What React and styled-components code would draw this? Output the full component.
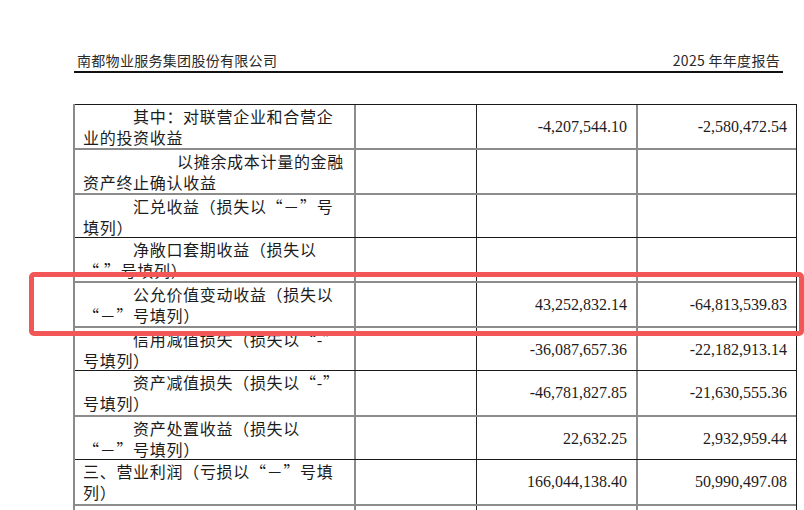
import React from "react";
import styled, { createGlobalStyle } from "styled-components";

const Global = createGlobalStyle`
  html, body { margin: 0; padding: 0; background: #fff; }
  body { overflow: hidden; width: 804px; height: 510px; }
  #root { position: relative; }
`;

const Page = styled.div`
  position: relative;
  width: 804px;
  height: 510px;
  overflow: hidden;
  background: #fff;
`;

const Header = styled.div`
  margin-left: 74px;
  width: 709px;
  box-sizing: border-box;
  padding: 50px 3px 1px 3px;
  display: flex;
  justify-content: space-between;
  align-items: center;
  border-bottom: 2px solid #111;
  font-family: "Noto Sans CJK SC", "Noto Sans", sans-serif;
  font-size: 14px;
  letter-spacing: 0.3px;
  line-height: 20px;
  color: #2a2a2a;
`;

const Table = styled.div`
  margin-top: 31px;
  margin-left: 73px;
  width: 724px;
  box-sizing: border-box;
  border-left: 2px solid #8a8a8a;
  border-right: 1px solid #1a1a1a;
  display: flex;
  flex-direction: column;
`;

const Row = styled.div`
  display: grid;
  grid-template-columns: 279px 122px 160px 160px;
  box-sizing: border-box;
  height: ${(p) => p.$h}px;
  border-top: ${(p) => (p.$grey ? "2px solid #8c8c8c" : "1px solid #1a1a1a")};
  flex-shrink: 0;
`;

const Cell = styled.div`
  box-sizing: border-box;
  border-left: ${(p) =>
    p.$edge === "grey" ? "2px solid #8c8c8c" : p.$edge === "dark" ? "1px solid #222" : "none"};
  min-width: 0;
`;

const LabelCell = styled(Cell)`
  padding: 1px 0 0 8px;
  font-family: "Noto Sans CJK SC", "Noto Sans", sans-serif;
  font-size: 16px;
  letter-spacing: 0.7px;
  line-height: 21px;
  color: #1c1c1c;
  white-space: nowrap;
`;

const Line = styled.div`
  padding-left: ${(p) => p.$indent || 0}px;
`;

const NumCell = styled(Cell)`
  display: flex;
  align-items: center;
  justify-content: flex-end;
  padding-right: 9px;
  font-family: "Liberation Serif", "Times New Roman", serif;
  font-size: 16px;
  color: #1c1c1c;
`;

const Highlight = styled.div`
  position: absolute;
  left: 29px;
  top: 272px;
  width: 775px;
  height: 64px;
  box-sizing: border-box;
  border: 5.5px solid #f35656;
  border-radius: 5px;
  pointer-events: none;
`;

const rows = [
  { h: 44, grey: false, indent: 50, lines: ["其中：对联营企业和合营企", "业的投资收益"], v: ["-4,207,544.10", "-2,580,472.54"] },
  { h: 45, grey: true, indent: 94, lines: ["以摊余成本计量的金融", "资产终止确认收益"], v: ["", ""] },
  { h: 44, grey: true, indent: 50, lines: ["汇兑收益（损失以“－”号", "填列）"], v: ["", ""] },
  { h: 44, grey: false, indent: 50, lines: ["净敞口套期收益（损失以", "“ ”号填列）"], v: ["", ""] },
  { h: 45, grey: true, indent: 50, lines: ["公允价值变动收益（损失以", "“－”号填列）"], v: ["43,252,832.14", "-64,813,539.83"] },
  { h: 44, grey: true, indent: 50, lines: ["信用减值损失（损失以“-”", "号填列）"], v: ["-36,087,657.36", "-22,182,913.14"] },
  { h: 45, grey: false, indent: 50, lines: ["资产减值损失（损失以“-”", "号填列）"], v: ["-46,781,827.85", "-21,630,555.36"] },
  { h: 44, grey: true, indent: 50, lines: ["资产处置收益（损失以", "“－”号填列）"], v: ["22,632.25", "2,932,959.44"] },
  { h: 45, grey: false, indent: 0, lines: ["三、营业利润（亏损以“－”号填", "列）"], v: ["166,044,138.40", "50,990,497.08"] },
  { h: 44, grey: true, indent: 0, lines: ["加：营业外收入"], v: ["391,635.84", "1,927,381.26"] },
];

export default function App() {
  return (
    <Page>
      <Global />
      <Header>
        <span>南都物业服务集团股份有限公司</span>
        <span>2025 年年度报告</span>
      </Header>
      <Table>
        {rows.map((r, i) => (
          <Row key={i} $h={r.h} $grey={r.grey}>
            <LabelCell>
              {r.lines.map((l, j) => (
                <Line key={j} $indent={j === 0 ? r.indent : 0}>
                  {l}
                </Line>
              ))}
            </LabelCell>
            <Cell $edge="grey" />
            <NumCell $edge="dark">{r.v[0]}</NumCell>
            <NumCell $edge="grey">{r.v[1]}</NumCell>
          </Row>
        ))}
      </Table>
      <Highlight />
    </Page>
  );
}
